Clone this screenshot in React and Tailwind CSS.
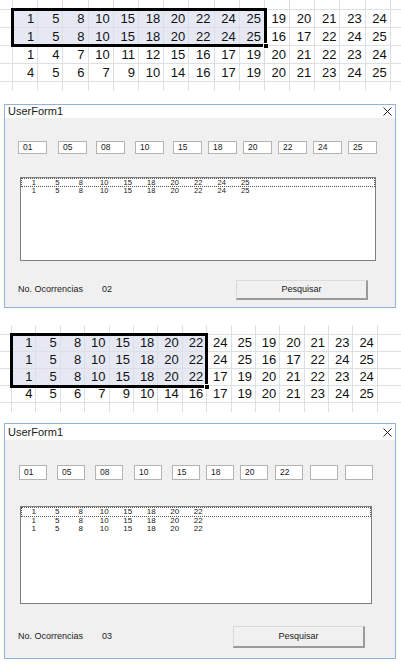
import React from 'react';

// Spreadsheet snapshots
const SHEET1 = [
  [1, 5, 8, 10, 15, 18, 20, 22, 24, 25, 19, 20, 21, 23, 24],
  [1, 5, 8, 10, 15, 18, 20, 22, 24, 25, 16, 17, 22, 24, 25],
  [1, 4, 7, 10, 11, 12, 15, 16, 17, 19, 20, 21, 22, 23, 24],
  [4, 5, 6, 7, 9, 10, 14, 16, 17, 19, 20, 21, 23, 24, 25],
];

const SHEET2 = [
  [1, 5, 8, 10, 15, 18, 20, 22, 24, 25, 19, 20, 21, 23, 24],
  [1, 5, 8, 10, 15, 18, 20, 22, 24, 25, 16, 17, 22, 24, 25],
  [1, 5, 8, 10, 15, 18, 20, 22, 17, 19, 20, 21, 22, 23, 24],
  [4, 5, 6, 7, 9, 10, 14, 16, 17, 19, 20, 21, 23, 24, 25],
];

const FONT_SHEET = { fontFamily: '"Liberation Sans", Arial, sans-serif' };
const FONT_FORM = { fontFamily: '"Liberation Sans", Tahoma, sans-serif' };

const GRID = 'border-[#dcdfe4]';

const Sheet = ({ rows, lead, colW, rowH, selCols, selRows, overlay }) => {
  const blank = Array.from({ length: 15 });
  return (
    <div className="relative text-[13px] text-[#111]" style={FONT_SHEET}>
      {/* partial row above */}
      <div className={`flex h-[10px] border-b ${GRID}`}>
        <div className={`${lead} h-full border-r ${GRID}`} />
        {blank.map((_, i) => (
          <div key={i} className={`${colW} h-full border-r ${GRID}`} />
        ))}
      </div>
      {rows.map((row, r) => (
        <div key={r} className={`flex ${rowH} border-b ${GRID}`}>
          <div className={`${lead} h-full border-r ${GRID}`} />
          {row.map((v, c) => {
            const sel = r < selRows && c < selCols;
            return (
              <div
                key={c}
                className={`${colW} h-full border-r ${GRID} flex items-center justify-end pr-[3px] ${sel ? 'bg-[#e6e9f4]' : ''}`}
              >
                {v}
              </div>
            );
          })}
        </div>
      ))}
      {/* partial row below */}
      <div className="flex h-[9px]">
        <div className={`${lead} h-full border-r ${GRID}`} />
        {blank.map((_, i) => (
          <div key={i} className={`${colW} h-full border-r ${GRID}`} />
        ))}
      </div>

      {/* selection rectangle */}
      <div className={`absolute ${overlay} border-[3px] border-black`}>
        <div className="absolute -right-[5px] -bottom-[5px] w-[6px] h-[6px] bg-black border border-white" />
      </div>
    </div>
  );
};

const CloseIcon = () => (
  <svg width="9" height="9" viewBox="0 0 9 9" className="text-[#222]">
    <path d="M0.5 0.5 L8.5 8.5 M8.5 0.5 L0.5 8.5" stroke="currentColor" strokeWidth="1" />
  </svg>
);

const UserForm = ({ cfg }) => (
  <div
    className="ml-[4px] w-[392px] border border-[#8fb3dc] bg-[#f0f0f0] flex flex-col text-[#1a1a1a]"
    style={FONT_FORM}
  >
    {/* Title bar */}
    <div className={`${cfg.titleH} bg-white flex items-center justify-between pl-[3px] pr-[3px]`}>
      <span className="text-[11px] leading-none">UserForm1</span>
      <CloseIcon />
    </div>

    {/* Number boxes */}
    <div className={`flex ${cfg.boxMt}`}>
      {cfg.boxes.map((b, i) => (
        <div
          key={i}
          className={`${cfg.boxMl[i]} ${cfg.boxW} ${cfg.boxH} bg-white border border-[#b4b4b4] flex items-center pl-[4px] text-[8.5px]`}
        >
          {b}
        </div>
      ))}
    </div>

    {/* List box */}
    <div className={`${cfg.listMt} ml-[15px] ${cfg.listW} ${cfg.listH} bg-white border border-[#7f7f7f]`}>
      {cfg.list.map((row, r) => (
        <div
          key={r}
          className={`flex ${r === 0 ? cfg.firstRowH : cfg.rowH} items-center ${cfg.rowText} ${r === 0 ? 'border border-dotted border-[#555]' : 'px-[1px]'}`}
        >
          {row.map((v, c) => (
            <span key={c} className="w-[23.5px] text-center">
              {v}
            </span>
          ))}
        </div>
      ))}
    </div>

    {/* Footer */}
    <div className={`flex items-center ${cfg.footMt} ${cfg.footMb} text-[9px]`}>
      <span className="ml-[13px] w-[84px]">No. Ocorrencias</span>
      <span className="w-[12px]">{cfg.count}</span>
      <button
        className={`${cfg.btnMl} w-[132px] ${cfg.btnH} bg-[#f0f0f0] border-t border-l border-[#dadada] border-r-2 border-b-2 border-r-[#9a9a9a] border-b-[#9a9a9a] text-[9px] flex items-center justify-center`}
      >
        Pesquisar
      </button>
    </div>
  </div>
);

const FORM1 = {
  titleH: 'h-[13px]',
  boxMt: 'mt-[23px]',
  boxW: 'w-[29px]',
  boxH: 'h-[13px]',
  boxMl: ['ml-[13px]', 'ml-[11px]', 'ml-[9px]', 'ml-[10px]', 'ml-[9px]', 'ml-[6px]', 'ml-[6px]', 'ml-[6px]', 'ml-[6px]', 'ml-[6px]'],
  boxes: ['01', '05', '08', '10', '15', '18', '20', '22', '24', '25'],
  listMt: 'mt-[23px]',
  listW: 'w-[356px]',
  listH: 'h-[84px]',
  firstRowH: 'h-[9px]',
  rowH: 'h-[7px]',
  rowText: 'text-[7.5px] leading-[7px]',
  list: [
    [1, 5, 8, 10, 15, 18, 20, 22, 24, 25],
    [1, 5, 8, 10, 15, 18, 20, 22, 24, 25],
  ],
  footMt: 'mt-[19px]',
  footMb: 'mb-[7px]',
  btnMl: 'ml-[122px]',
  btnH: 'h-[20px]',
  count: '02',
};

const FORM2 = {
  titleH: 'h-[16px]',
  boxMt: 'mt-[25px]',
  boxW: 'w-[28px]',
  boxH: 'h-[15px]',
  boxMl: ['ml-[14px]', 'ml-[10px]', 'ml-[10px]', 'ml-[11px]', 'ml-[10px]', 'ml-[6px]', 'ml-[6px]', 'ml-[7px]', 'ml-[7px]', 'ml-[7px]'],
  boxes: ['01', '05', '08', '10', '15', '18', '20', '22', '', ''],
  listMt: 'mt-[26px]',
  listW: 'w-[352px]',
  listH: 'h-[98px]',
  firstRowH: 'h-[10px]',
  rowH: 'h-[8px]',
  rowText: 'text-[8px] leading-[8px]',
  list: [
    [1, 5, 8, 10, 15, 18, 20, 22],
    [1, 5, 8, 10, 15, 18, 20, 22],
    [1, 5, 8, 10, 15, 18, 20, 22],
  ],
  footMt: 'mt-[22px]',
  footMb: 'mb-[10px]',
  btnMl: 'ml-[119px]',
  btnH: 'h-[22px]',
  count: '03',
};

export default function App() {
  return (
    <div className="w-[401px] h-[666px] bg-white overflow-hidden flex flex-col">
      <Sheet
        rows={SHEET1}
        lead="w-[13px]"
        colW="w-[25.2px]"
        rowH="h-[18px]"
        selCols={10}
        selRows={2}
        overlay="left-[11px] top-[8px] w-[256px] h-[39px]"
      />
      <div className="mt-[13px]">
        <UserForm cfg={FORM1} />
      </div>
      <div className="mt-[17px]">
        <Sheet
          rows={SHEET2}
          lead="w-[12px]"
          colW="w-[24.4px]"
          rowH="h-[17px]"
          selCols={8}
          selRows={3}
          overlay="left-[10px] top-[8px] w-[198px] h-[55px]"
        />
      </div>
      <div className="mt-[11px]">
        <UserForm cfg={FORM2} />
      </div>
    </div>
  );
}
